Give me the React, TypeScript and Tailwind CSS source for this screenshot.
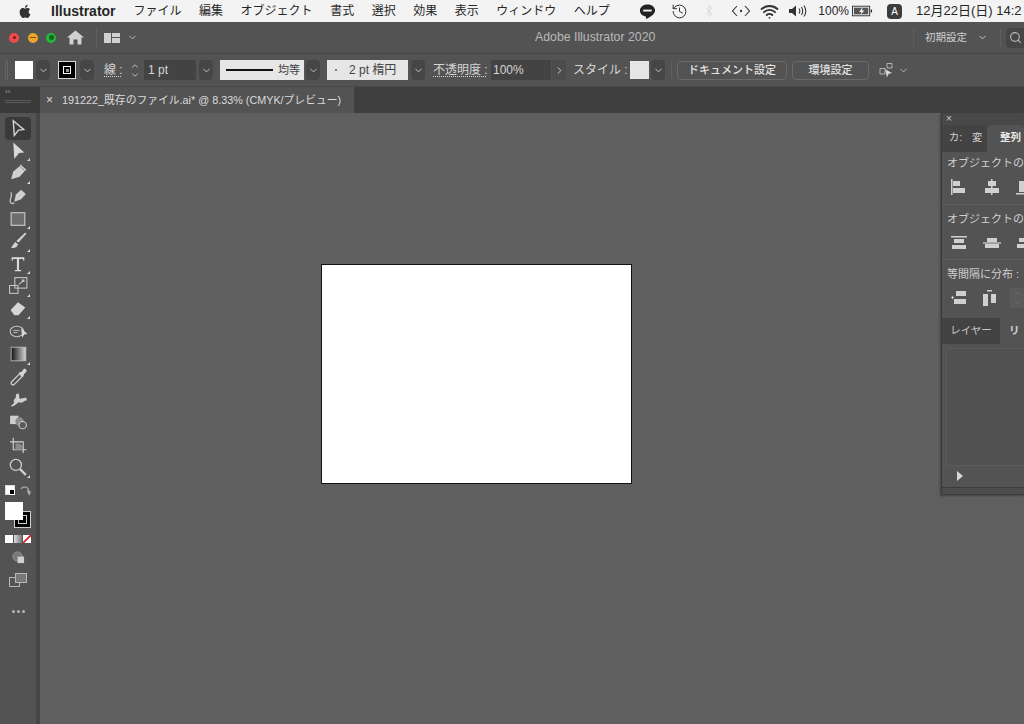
import { ChevronDown, ChevronRight, ChevronUp, History, Search, Wifi, Bluetooth } from 'lucide-react';

const font = { fontFamily: '"Liberation Sans", "Noto Sans CJK JP", sans-serif' };

const Chevron = ({ className = '' }: { className?: string }) => (
  <span className={`flex h-[20px] w-[14px] items-center justify-center rounded-sm bg-[#464646] ${className}`}>
    <ChevronDown size={11} strokeWidth={2} className="text-[#cfcfcf]" />
  </span>
);

const Corner = () => <span className="absolute right-[1px] bottom-[1px] h-0 w-0 border-b-[3px] border-l-[3px] border-b-[#d8d8d8] border-l-transparent" />;

const tools: { d: React.ReactNode; corner?: boolean; active?: boolean }[] = [
  { active: true, d: <path d="M5 2.5 L15 11 L10 11.5 L6 16.5 Z" fill="none" stroke="#d8d8d8" strokeWidth="1.3" /> },
  { corner: true, d: <path d="M5 1.5 L15.5 11 L10.5 11.5 L6 17 Z" fill="#d8d8d8" /> },
  { corner: true, d: <g fill="#d0d0d0"><path d="M3 15.5 L5 8 L11 3 L16 7.5 L11 13 Z" /><path d="M12 1.5 L17.5 6.5 L16.5 7.5 L11 2.5 Z" /></g> },
  { d: <g><path d="M6 15 L7.5 8 L12.5 3.5 L17 7.5 L12.5 12.5 Z" fill="#d0d0d0" /><path d="M6 16 C3 18 1 15 2.5 12 C3.5 10 4 8.5 2.8 6" fill="none" stroke="#cfcfcf" strokeWidth="1.1" /></g> },
  { corner: true, d: <rect x="3" y="3.5" width="13" height="12" fill="#6d6d6d" stroke="#c8c8c8" strokeWidth="1.1" /> },
  { corner: true, d: <g fill="#d4d4d4"><path d="M16.5 1.5 L17.5 2.5 L10 11 L8 9.5 Z" /><path d="M7 10.5 L9.5 12.5 C9 15.5 6 16.5 2.5 16 C4.5 15 5 12 7 10.5 Z" /></g> },
  { corner: true, d: <path d="M3.5 3 H15.5 V6.5 H14.7 L14.2 4.8 H10.5 V15.2 H12.5 V16.5 H6.5 V15.2 H8.5 V4.8 H4.8 L4.3 6.5 H3.5 Z" fill="#dcdcdc" /> },
  { corner: true, d: <g fill="none" stroke="#c8c8c8" strokeWidth="1"><rect x="6.5" y="1.5" width="11.5" height="10" /><rect x="1.5" y="9" width="8" height="7.5" /><path d="M10.5 8 L15 4 M13 3.8 H15.2 V6" /></g> },
  { corner: true, d: <path d="M2.5 10.5 L9.5 3 L16.5 8 L10 15.5 L6 15.5 Z" fill="#d6d6d6" /> },
  { d: <g><ellipse cx="8.5" cy="9" rx="6.5" ry="5" fill="none" stroke="#c8c8c8" strokeWidth="1" /><path d="M5 8 H11 M5 10 H9" stroke="#c8c8c8" strokeWidth=".8" /><path d="M12.5 6 L18.5 11.5 L15.5 12 L13.5 15 Z" fill="#d8d8d8" /></g> },
  { corner: true, d: <g><defs><linearGradient id="tool-grad"><stop offset="0" stopColor="#111" /><stop offset="1" stopColor="#d8d8d8" /></linearGradient></defs><rect x="3" y="3" width="14" height="13" fill="url(#tool-grad)" stroke="#bdbdbd" strokeWidth="0.8" /></g> },
  { d: <g><path d="M3.5 16.5 C2.5 15.5 3 14.5 4 13.5 L11 6.5 L13.5 9 L6.5 16 C5.5 17 4.5 17.3 3.5 16.5 Z" fill="none" stroke="#cfcfcf" strokeWidth="1.2" /><path d="M10 5.5 L13 4.5 L15 2 C16 1 18.5 3 17.5 4.5 L15.5 6.5 L14.5 9.5 Z" fill="#d4d4d4" /></g> },
  { d: <path d="M2.5 16.5 L6 13 C4 10 8 9.5 7.5 6.5 C7.4 5 8.5 3.5 10 4.5 C11.5 5.8 10 7.5 11 9 C12.5 10 15 7.5 17.5 8.5 L18 11 C15.5 10.5 15 13 12.5 13 C10.5 13 9.5 12.5 8.5 14 L5 16.5 Z" fill="#cfcfcf" /> },
  { d: <g><rect x="2" y="3.5" width="8" height="8" fill="#cfcfcf" /><circle cx="11" cy="9" r="4" fill="#8c8c8c" /><circle cx="14" cy="12.5" r="3.5" fill="#5a5a5a" stroke="#cfcfcf" strokeWidth="1" /></g> },
  { d: <g><path d="M2 6.5 H14.5 V17 M5 2.5 V14 H17.5" fill="none" stroke="#d0d0d0" strokeWidth="1.1" /><path d="M7 8 H11 L14 10.5 V14 H7 Z" fill="#8a8a8a" /></g> },
  { corner: true, d: <g fill="none" stroke="#cfcfcf"><circle cx="7.5" cy="7.5" r="5.3" strokeWidth="1.2" /><path d="M11.5 11.5 L17 17" strokeWidth="2.2" /></g> },
];

const MenuBar = () => (
  <div className="flex h-[22px] items-center bg-[#f3f3f3] text-[12px] text-[#262626]">
    <svg viewBox="0 0 16 18" className="ml-[18px] h-[15px] w-[15px]" fill="#333">
      <path d="M11.8 9.4c0-2 1.6-2.9 1.7-3-.9-1.4-2.4-1.6-2.9-1.6-1.2-.1-2.4.7-3 .7s-1.6-.7-2.6-.7C3.6 4.8 2.3 5.6 1.6 6.8.2 9.2 1.2 12.8 2.6 14.8c.7 1 1.5 2.1 2.5 2 1 0 1.4-.6 2.6-.6s1.6.6 2.6.6 1.8-1 2.4-2c.8-1.1 1.1-2.2 1.1-2.3-.1 0-2-.8-2-3.1zM9.8 3.4c.5-.7.9-1.6.8-2.6-.8 0-1.8.5-2.4 1.2-.5.6-1 1.6-.8 2.5.9.1 1.8-.4 2.4-1.1z" />
    </svg>
    <span className="ml-[18px] text-[14px] font-bold">Illustrator</span>
    <div className="ml-[18px] flex gap-[17.5px] whitespace-nowrap">
      <span>ファイル</span>
      <span>編集</span>
      <span>オブジェクト</span>
      <span>書式</span>
      <span>選択</span>
      <span>効果</span>
      <span>表示</span>
      <span>ウィンドウ</span>
      <span>ヘルプ</span>
    </div>
    <div className="ml-auto flex items-center whitespace-nowrap">
      <svg viewBox="0 0 18 18" className="h-[17px] w-[17px]">
        <path d="M9 1.5C4.3 1.5 1 4.3 1 8c0 3.3 2.7 5.8 6.3 6.3L7.5 17c3-1.2 9.5-4.8 9.5-9 0-3.7-3.3-6.5-8-6.5z" fill="#222" />
        <rect x="4.5" y="7" width="9" height="2" fill="#f3f3f3" />
      </svg>
      <History size={17} strokeWidth={1.4} className="ml-[15px] text-[#333]" />
      <Bluetooth size={14} strokeWidth={1.2} className="ml-[14px] text-[#cfcfcf]" />
      <svg viewBox="0 0 20 14" className="ml-[15px] h-[14px] w-[20px]" fill="none" stroke="#333" strokeWidth="1.1">
        <path d="M6 2 L1.5 7 L6 12 M14 2 L18.5 7 L14 12" />
        <circle cx="10" cy="7" r=".6" fill="#333" />
      </svg>
      <Wifi size={19} strokeWidth={2.4} className="ml-[9px] text-[#333]" />
      <svg viewBox="0 0 20 14" className="ml-[9px] h-[14px] w-[20px]">
        <path d="M1 5 H4 L8 1.5 V12.5 L4 9 H1 Z" fill="#333" />
        <path d="M11 4.5 C12 6 12 8 11 9.5 M13.5 3 C15 5.5 15 8.5 13.5 11 M16 1.5 C18.3 5 18.3 9 16 12.5" fill="none" stroke="#333" strokeWidth="1.1" />
      </svg>
      <span className="ml-[10px] text-[12px]">100%</span>
      <svg viewBox="0 0 22 12" className="ml-[3px] h-[12px] w-[21px]">
        <rect x=".5" y="1" width="18" height="10" fill="none" stroke="#333" />
        <rect x="2" y="2.5" width="15" height="7" fill="#555" />
        <path d="M11 2 L7.5 7 H10 L8.5 10.5 L13 5.5 H10.5 Z" fill="#f3f3f3" />
        <rect x="19.5" y="4.5" width="1.5" height="3" fill="#333" />
      </svg>
      <span className="ml-[14px] flex h-[15px] w-[15px] items-center justify-center rounded-sm bg-[#3c3c3c] text-[10px] text-white">A</span>
      <span className="ml-[14px] w-[108px] text-[13px]">12月22日(日) 14:2</span>
    </div>
  </div>
);

const Light = ({ color, mark }: { color: string; mark: string }) => (
  <span className={`flex h-[10px] w-[10px] items-center justify-center rounded-full ${color}`}>
    <span className={mark} />
  </span>
);

const TitleBar = () => (
  <div className="relative flex h-[32px] items-center border-b border-[#454545] bg-[#535353] text-[12.3px] whitespace-nowrap">
    <span className="ml-[9px]">
      <Light color="bg-[#ef4a4c]" mark="h-[3px] w-[3px] rounded-full bg-[#7a1518]" />
    </span>
    <span className="ml-[9px]">
      <Light color="bg-[#e9a62a]" mark="h-px w-[6px] bg-[#7c5208]" />
    </span>
    <span className="ml-[8px]">
      <Light color="bg-[#27b43c]" mark="h-[5px] w-[5px] rounded-full bg-[#106a1e]" />
    </span>
    <svg viewBox="0 0 17 15" className="ml-[11px] h-[15px] w-[17px]" fill="#d0d0d0">
      <path d="M8.5 0.5 L17 7.5 H14.5 V14.5 H10.5 V9.5 H6.5 V14.5 H2.5 V7.5 H0 Z" />
    </svg>
    <span className="ml-[12px] h-[20px] w-px bg-[#5e5e5e]" />
    <svg viewBox="0 0 16 10" className="ml-[7px] h-[10px] w-[16px]" fill="#d0d0d0">
      <rect width="7" height="10" />
      <rect x="8" width="8" height="4" />
      <rect x="8" y="5" width="8" height="5" />
    </svg>
    <ChevronDown size={11} strokeWidth={2} className="ml-[7px] text-[#bdbdbd]" />
    <span className="ml-[397px] text-[#b9b9b9]">Adobe Illustrator 2020</span>
    <span className="ml-auto h-[20px] w-px bg-[#5e5e5e]" />
    <span className="ml-[11px] w-[42px] text-[10.5px] text-[#cfcfcf]">初期設定</span>
    <ChevronDown size={11} strokeWidth={2} className="ml-[10px] text-[#cfcfcf]" />
    <span className="ml-[12px] h-[20px] w-px bg-[#5e5e5e]" />
    <span className="ml-[5px] flex h-[20px] w-[18px] items-center rounded-l-sm bg-[#464646] pl-[3px]">
      <Search size={13} className="text-[#bdbdbd]" />
    </span>
  </div>
);

const ControlBar = () => (
  <div className="flex h-[32px] items-center bg-[#535353] text-[12px] whitespace-nowrap text-[#d6d6d6]">
    <span className="ml-[5px] h-[20px] w-[3px] border-x border-[#636363]" />
    <span className="ml-[7px] h-[18px] w-[18px] bg-white" />
    <Chevron className="ml-[3px]" />
    <span className="ml-[8px] flex h-[18px] w-[18px] items-center justify-center border border-[#d8d8d8] bg-black">
      <span className="flex h-[8px] w-[8px] items-center justify-center border border-white">
        <span className="h-[3px] w-[3px] bg-[#999]" />
      </span>
    </span>
    <Chevron className="ml-[4px]" />
    <span className="ml-[10px] w-[18px] underline decoration-dotted underline-offset-2">線 :</span>
    <span className="ml-[6px] flex w-[14px] flex-col items-center">
      <ChevronUp size={10} className="-mb-[1px]" />
      <ChevronDown size={10} />
    </span>
    <span className="ml-[2px] flex h-[20px] w-[52px] items-center bg-[#434343] pl-[4px]">1 pt</span>
    <Chevron className="ml-[3px]" />
    <span className="ml-[7px] flex h-[20px] w-[84px] items-center bg-[#e6e6e6] pl-[6px] text-[#444]">
      <span className="h-[2px] w-[47px] bg-[#111]" />
      <span className="ml-[5px] text-[11px]">均等</span>
    </span>
    <Chevron className="ml-[2px]" />
    <span className="ml-[7px] flex h-[20px] w-[81px] items-center bg-[#e6e6e6] pl-[8px] text-[#444]">
      <span className="h-[2px] w-[2px] rounded-full bg-[#555]" />
      <span className="ml-[12px] text-[12px]">2 pt 楕円</span>
    </span>
    <Chevron className="ml-[3px]" />
    <span className="ml-[8px] w-[54px] underline decoration-dotted underline-offset-2">不透明度 :</span>
    <span className="ml-[4px] flex h-[20px] w-[60px] items-center bg-[#434343] pl-[2px]">100%</span>
    <span className="ml-[1px] flex h-[20px] w-[14px] items-center justify-center bg-[#4c4c4c]">
      <ChevronRight size={11} strokeWidth={2} />
    </span>
    <span className="ml-[7px] w-[52px]">スタイル :</span>
    <span className="ml-[5px] h-[18px] w-[19px] bg-[#e6e6e6]" />
    <Chevron className="ml-[2px]" />
    <span className="ml-[6px] h-[20px] w-px bg-[#5e5e5e]" />
    <span className="ml-[5px] flex h-[19px] w-[110px] items-center justify-center rounded-sm border border-[#6a6a6a] text-[11px] font-medium text-[#e2e2e2]">ドキュメント設定</span>
    <span className="ml-[5px] flex h-[19px] w-[77px] items-center justify-center rounded-sm border border-[#6a6a6a] text-[11px] font-medium text-[#e2e2e2]">環境設定</span>
    <svg viewBox="0 0 16 16" className="ml-[10px] h-[16px] w-[16px]" fill="none" stroke="#bdbdbd">
      <path d="M1 6.5H6V12H1ZM8 1.5H13V6H8Z" strokeWidth=".9" />
      <path d="M6 7 L13 11 L9.5 12 L8 15.5 Z" fill="#d4d4d4" stroke="none" />
    </svg>
    <ChevronDown size={11} strokeWidth={2} className="ml-[3px] text-[#bdbdbd]" />
  </div>
);

const TabBar = () => (
  <div className="flex h-[27px] border-t border-[#484848] bg-[#3f3f3f] text-[12px]">
    <div className="flex w-[40px] flex-col bg-[#3a3a3a] pl-[5px] text-[8px] leading-[10px] text-[#9a9a9a]">
      <span>››</span>
      <span className="mt-[3px] h-[3px] w-[26px] border-y border-[#5a5a5a]" />
    </div>
    <div className="flex w-[314px] items-center bg-[#535353] pl-[6px] whitespace-nowrap text-[#dcdcdc]">
      <span className="w-[16px] shrink-0 text-[12px]">×</span>
      <span className="text-[10.8px]">191222_既存のファイル.ai* @ 8.33% (CMYK/プレビュー)</span>
    </div>
  </div>
);

const Toolbar = () => (
  <div className="flex w-[40px] border-r-[4px] border-[#464646] bg-[#535353]">
    <div className="flex w-full flex-col items-center pt-[4px]">
      {tools.map((tool, i) => (
        <span key={i} className={`relative flex h-[22.6px] w-[26px] items-center justify-center rounded-sm ${tool.active ? 'bg-[#3a3a3a]' : ''}`}>
          <svg viewBox="0 0 20 19" className="h-[20px] w-[21px] shrink-0 overflow-visible">
            {tool.d}
          </svg>
          {tool.corner && <Corner />}
        </span>
      ))}
      <div className="mt-[6px] flex w-[26px] items-center justify-between">
        <span className="relative h-[10px] w-[10px] border border-[#ddd] bg-white">
          <span className="absolute right-[-1px] bottom-[-1px] h-[6px] w-[6px] border border-white bg-black" />
        </span>
        <svg viewBox="0 0 12 12" className="h-[11px] w-[11px]" fill="none" stroke="#aaa" strokeWidth="1.5">
          <path d="M1 4 C4 1 9 1 10 8 M8 6 L10 10 L11.5 7" />
        </svg>
      </div>
      <div className="relative mt-[6px] h-[26px] w-[27px]">
        <span className="absolute top-[9px] left-[9px] flex h-[17px] w-[17px] items-center justify-center border border-[#cfcfcf] bg-black">
          <span className="h-[9px] w-[9px] border border-[#cfcfcf]" />
        </span>
        <span className="absolute top-0 left-0 h-[18px] w-[18px] bg-white" />
      </div>
      <div className="mt-[7px] flex h-[8px] w-[26px] gap-[1px]">
        <span className="h-full w-[8px] bg-white" />
        <span className="h-full w-[8px] bg-gradient-to-r from-[#ddd] to-[#777]" />
        <svg viewBox="0 0 8 8" className="h-[8px] w-[8px]">
          <rect width="8" height="8" fill="#fff" />
          <path d="M0 8 L8 0" stroke="#e02020" strokeWidth="1.8" />
        </svg>
      </div>
      <svg viewBox="0 0 14 14" className="mt-[8px] h-[13px] w-[13px]">
        <circle cx="6" cy="6" r="5" fill="#777" stroke="#999" />
        <rect x="6" y="6" width="7" height="7" fill="#cfcfcf" />
      </svg>
      <svg viewBox="0 0 18 14" className="mt-[9px] h-[14px] w-[18px]" fill="none" stroke="#b8b8b8">
        <rect x=".5" y="4.5" width="10" height="9" />
        <rect x="6.5" y=".5" width="11" height="9" fill="#777" />
      </svg>
      <span className="mt-[23px] flex gap-[2px]">
        <span className="h-[3px] w-[3px] rounded-full bg-[#b5b5b5]" />
        <span className="h-[3px] w-[3px] rounded-full bg-[#b5b5b5]" />
        <span className="h-[3px] w-[3px] rounded-full bg-[#b5b5b5]" />
      </span>
    </div>
  </div>
);

const AlignIcon = ({ kind }: { kind: number }) => (
  <svg viewBox="0 0 18 16" className="h-[16px] w-[18px]" fill="#d0d0d0">
    {kind === 0 && <g><rect x="1" width="1.5" height="16" /><rect x="3" y="2" width="7" height="5" /><rect x="3" y="9" width="12" height="5" /></g>}
    {kind === 1 && <g><rect x="8" width="1.5" height="16" /><rect x="5" y="2" width="8" height="5" /><rect x="2" y="9" width="14" height="5" /></g>}
    {kind === 2 && <g><rect y="14" width="16" height="1.5" /><rect x="3" y="2" width="5" height="11" /><rect x="10" y="7" width="6" height="6" /></g>}
    {kind === 3 && <g><rect x="1" y="1" width="16" height="1.5" /><rect x="4" y="4" width="10" height="4" /><rect x="2" y="10" width="14" height="4" /></g>}
    {kind === 4 && <g><rect x="0" y="7.3" width="18" height="1.3" /><rect x="4" y="3" width="10" height="4" /><rect x="2" y="9" width="14" height="4" /></g>}
    {kind === 5 && <g><rect x="3" y="3" width="12" height="4" /><rect x="1" y="9" width="16" height="4" /></g>}
    {kind === 6 && <g><rect x="6" y="1" width="10" height="5" /><rect x="4" y="9" width="12" height="5" /><path d="M1 7.5 L3 5.5 L3 7 H4 V8 H3 V9.5 Z" /></g>}
    {kind === 7 && <g><rect x="3" y="4" width="5" height="12" /><rect x="11" y="4" width="5" height="9" /><rect x="7" y="0" width="5" height="1.5" /></g>}
  </svg>
);

const AlignRow = ({ kinds }: { kinds: number[] }) => (
  <div className="flex h-[24px] items-center gap-[15px] overflow-hidden pl-[8px]">
    {kinds.map((kind) => (
      <span key={kind} className="shrink-0">
        <AlignIcon kind={kind} />
      </span>
    ))}
  </div>
);

const Panel = () => (
  <div className="absolute top-0 right-0 flex h-[382px] w-[83px] flex-col overflow-hidden border-l border-[#3a3a3a] bg-[#535353] text-[11px] whitespace-nowrap text-[#d0d0d0] shadow-[-1px_1px_2px_rgba(0,0,0,0.3)]">
    <div className="flex h-[12px] items-center bg-[#484848] pl-[4px] text-[10px] leading-none text-[#cfcfcf]">×</div>
    <div className="flex h-[27px] bg-[#484848] text-[10.5px]">
      <span className="flex w-[27px] items-center justify-center bg-[#434343]">カ:</span>
      <span className="flex w-[18px] items-center overflow-hidden bg-[#434343] pl-[3px]">変</span>
      <span className="flex flex-1 items-center rounded-t-sm bg-[#535353] pl-[13px] font-bold text-[#e8e8e8]">整列</span>
    </div>
    <div className="flex h-[24px] items-center pl-[5px]">オブジェクトの</div>
    <AlignRow kinds={[0, 1, 2]} />
    <div className="mt-[5px] h-px bg-[#5e5e5e]" />
    <div className="mt-[2px] flex h-[24px] items-center pl-[5px]">オブジェクトの</div>
    <AlignRow kinds={[3, 4, 5]} />
    <div className="mt-[4px] h-px bg-[#5e5e5e]" />
    <div className="mt-[3px] flex h-[24px] items-center pl-[5px]">等間隔に分布 :</div>
    <div className="flex h-[24px] items-center gap-[12px] pl-[8px]">
      <AlignIcon kind={6} />
      <AlignIcon kind={7} />
      <span className="flex h-[20px] w-[14px] flex-col items-center justify-center bg-[#5a5a5a] text-[#717171]">
        <ChevronUp size={9} />
        <ChevronDown size={9} />
      </span>
    </div>
    <div className="mt-[8px] flex h-[26px] shrink-0 bg-[#484848] text-[10.5px]">
      <span className="flex w-[58px] shrink-0 items-center justify-center bg-[#434343] text-[#c8c8c8]">レイヤー</span>
      <span className="flex flex-1 items-center bg-[#535353] pl-[9px] font-bold">リ</span>
    </div>
    <div className="mt-[4px] ml-[4px] h-[118px] shrink-0 border-t border-b border-l border-[#5b5b5b] bg-[#515151]" />
    <div className="flex h-[21px] shrink-0 items-center pl-[15px]">
      <span className="h-0 w-0 border-y-[5px] border-l-[6px] border-y-transparent border-l-[#d8d8d8]" />
    </div>
    <div className="h-[8px] shrink-0 border-y border-[#3c3c3c] bg-[#4c4c4c]" />
  </div>
);

export default function App() {
  return (
    <div className="flex h-[724px] w-[1024px] flex-col overflow-hidden bg-[#5f5f5f]" style={font}>
      <MenuBar />
      <TitleBar />
      <ControlBar />
      <TabBar />
      <div className="flex flex-1">
        <Toolbar />
        <div className="relative flex-1 bg-[#5f5f5f]">
          <div className="mt-[151px] ml-[281px] h-[220px] w-[311px] border border-[#111] bg-white" />
          <Panel />
        </div>
      </div>
    </div>
  );
}
